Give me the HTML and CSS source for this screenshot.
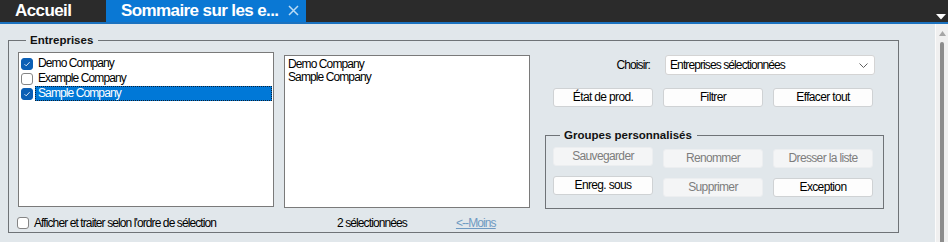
FILE: index.html
```html
<!DOCTYPE html>
<html lang="fr">
<head>
<meta charset="utf-8">
<title>Sommaire sur les entreprises</title>
<link rel="stylesheet" href="styles.css">
</head>
<body>
<div class="app">
  <div class="tabbar">
    <div class="tab">Accueil</div>
    <div class="tab tab-active">
      <span class="tab-title">Sommaire sur les e...</span>
      <svg class="tab-close" width="11" height="11" viewBox="0 0 11 11"><path d="M1 1 L10 10 M10 1 L1 10" stroke="#b9dbf5" stroke-width="1.5" fill="none"/></svg>
    </div>
    <div class="tab-spacer"></div>
    <svg class="tab-menu" width="10" height="6" viewBox="0 0 10 6"><path d="M0 0 H10 L5 5.5 Z" fill="#ffffff"/></svg>
  </div>
  <div class="main">
    <div class="content">
      <fieldset class="group">
        <legend class="group-legend">Entreprises</legend>
        <div class="group-body">
          <div class="col col-left">
            <div class="listbox list-check">
              <div class="check-row">
                <span class="cb cb-on"><svg width="12" height="12" viewBox="0 0 12 12"><path d="M3 6.2 L5 8.2 L9.2 3.8" stroke="#fff" stroke-width="1" fill="none"/></svg></span>
                <span class="row-label">Demo Company</span>
              </div>
              <div class="check-row">
                <span class="cb"></span>
                <span class="row-label">Example Company</span>
              </div>
              <div class="check-row">
                <span class="cb cb-on"><svg width="12" height="12" viewBox="0 0 12 12"><path d="M3 6.2 L5 8.2 L9.2 3.8" stroke="#fff" stroke-width="1" fill="none"/></svg></span>
                <span class="row-label row-selected">Sample Company</span>
              </div>
            </div>
            <div class="footer-row">
              <span class="cb cb-footer"></span>
              <span class="footer-text">Afficher et traiter selon l'ordre de sélection</span>
            </div>
          </div>
          <div class="col col-mid">
            <div class="listbox list-plain">
              <div class="plain-row">Demo Company</div>
              <div class="plain-row">Sample Company</div>
            </div>
            <div class="footer-row footer-mid">
              <span class="count">2 sélectionnées</span>
              <a class="less-link" href="#">&lt;--Moins</a>
            </div>
          </div>
          <div class="col col-right">
            <div class="choose-row">
              <span class="choose-label">Choisir:</span>
              <div class="select">
                <span>Entreprises sélectionnées</span>
                <svg width="9" height="5" viewBox="0 0 9 5"><path d="M0.5 0.5 L4.5 4.5 L8.5 0.5" stroke="#606060" stroke-width="1" fill="none"/></svg>
              </div>
            </div>
            <div class="btn-row">
              <button class="btn">État de prod.</button>
              <button class="btn">Filtrer</button>
              <button class="btn">Effacer tout</button>
            </div>
            <fieldset class="subgroup">
              <legend class="group-legend sub-legend">Groupes personnalisés</legend>
              <div class="btn-grid">
                <button class="btn btn-disabled">Sauvegarder</button>
                <button class="btn btn-disabled btn-low">Renommer</button>
                <button class="btn btn-disabled btn-low">Dresser la liste</button>
                <button class="btn">Enreg. sous</button>
                <button class="btn btn-disabled btn-low">Supprimer</button>
                <button class="btn btn-low">Exception</button>
              </div>
            </fieldset>
          </div>
        </div>
      </fieldset>
    </div>
    <div class="scrollbar">
      <svg class="scroll-up" width="7" height="5" viewBox="0 0 7 5"><path d="M0 5 L3.5 0 L7 5 Z" fill="#a6a6a6"/></svg>
      <div class="scroll-thumb"></div>
    </div>
  </div>
</div>
</body>
</html>
```
FILE: styles.css
```css
* { box-sizing: border-box; }

html, body {
  margin: 0;
  padding: 0;
  width: 948px;
  height: 242px;
  overflow: hidden;
  background: #e1e7eb;
  font-family: "Liberation Sans", Arial, sans-serif;
  font-size: 12px;
  letter-spacing: -0.9px;
  color: #000;
}

.app {
  display: flex;
  flex-direction: column;
  height: 242px;
}

/* ---------- tab bar ---------- */
.tabbar {
  display: flex;
  align-items: stretch;
  height: 24px;
  background: #2b2b2b;
  border-bottom: 2px solid #1b72bf;
  flex: none;
}

.tab {
  display: flex;
  align-items: center;
  width: 106px;
  padding-left: 15px;
  color: #fff;
  font-weight: bold;
  font-size: 17px;
  letter-spacing: -0.6px;
  line-height: 22px;
  white-space: nowrap;
}

.tab-active {
  width: 200px;
  background: #0a78d4;
}

.tab-title { flex: 1; }

.tab-close {
  flex: none;
  margin-right: 7px;
  margin-top: -1px;
}

.tab-spacer { flex: 1; }

.tab-menu {
  align-self: flex-start;
  margin-top: 14px;
  margin-right: 2px;
}

/* ---------- main area ---------- */
.main {
  flex: 1;
  display: flex;
  min-height: 0;
}

.content {
  flex: 1;
  padding: 9px 0 0 8px;
}

.group {
  width: 891px;
  margin: 0;
  padding: 5px 14px 2px 9px;
  border: 1px solid #6f7377;
}

.group-legend {
  padding: 0 5px 0 4px;
  margin-left: 8px;
  font-weight: bold;
  font-size: 11.5px;
  letter-spacing: 0;
  line-height: 14px;
  color: #111;
}

.group-body {
  display: flex;
  align-items: flex-start;
}

.col {
  display: flex;
  flex-direction: column;
}

.col-left { width: 256px; }
.col-mid { width: 246px; margin-left: 10px; }
.col-right { width: 339px; margin-left: 15px; margin-top: 3px; }

.listbox {
  background: #fff;
  border: 1px solid #7a7a7a;
}

.list-check {
  height: 155px;
  padding: 3px 1px 0 2px;
}

.check-row {
  display: flex;
  align-items: center;
  height: 15px;
}

.cb {
  flex: none;
  width: 12px;
  height: 12px;
  border: 1px solid #858585;
  border-radius: 3px;
  background: #fff;
  display: flex;
  align-items: center;
  justify-content: center;
}

.cb svg { display: block; }

.cb-on {
  background: #0b5fb5;
  border-color: #0b5fb5;
}

.row-label {
  flex: 1;
  height: 15px;
  margin-left: 2px;
  padding-left: 3px;
  line-height: 15px;
  white-space: nowrap;
}

.row-selected {
  background: #0078d7;
  color: #fff;
  outline: 1px dotted #0d2136;
  outline-offset: -1px;
}

.list-plain {
  height: 153px;
  margin-top: 3px;
  padding: 2px 3px 0 3px;
}

.plain-row {
  line-height: 13px;
  white-space: nowrap;
}

.footer-row {
  display: flex;
  align-items: center;
  height: 15px;
  margin-top: 8px;
  white-space: nowrap;
}

.cb-footer {
  margin-left: -1px;
}

.footer-text { margin-left: 5px; }

.footer-mid {
  margin-top: 7px;
  padding-left: 53px;
}

.less-link {
  margin-left: 49px;
  color: #6f9ac2;
  text-decoration: underline;
}

/* ---------- right panel ---------- */
.choose-row {
  display: flex;
  align-items: center;
  height: 20px;
  padding-right: 9px;
}

.choose-label {
  flex: 1;
  text-align: right;
  margin-right: 15px;
}

.select {
  width: 210px;
  height: 20px;
  display: flex;
  align-items: center;
  justify-content: space-between;
  padding: 0 6px 0 4px;
  background: #fff;
  border: 1px solid #d4d4d4;
  border-radius: 3px;
}

.btn-row {
  display: flex;
  gap: 10px;
  margin-top: 13px;
  padding-left: 8px;
}

.btn {
  width: 100px;
  height: 19px;
  margin: 0;
  padding: 0;
  font-family: "Liberation Sans", Arial, sans-serif;
  font-size: 12px;
  letter-spacing: -0.65px;
  line-height: 17px;
  color: #000;
  background: #fdfdfd;
  border: 1px solid #cfd2d4;
  border-radius: 3px;
}

.btn-disabled {
  background: #f4f5f6;
  border-color: #eceef0;
  color: #7d7d7d;
}

.btn-low { margin-top: 2px; }

.subgroup {
  margin: 21px 0 0 0;
  padding: 5px 7px 11px 7px;
  border: 1px solid #6f7377;
}

.sub-legend {
  margin-left: 7px;
}

.btn-grid {
  display: grid;
  grid-template-columns: repeat(3, 100px);
  column-gap: 10px;
  row-gap: 8px;
  align-items: start;
}

/* ---------- scrollbar ---------- */
.scrollbar {
  flex: none;
  width: 13px;
  background: #f0f0f0;
  border-left: 1px solid #fbfbfb;
  display: flex;
  flex-direction: column;
  align-items: center;
  padding-top: 7px;
}

.scroll-up { display: block; flex: none; }

.scroll-thumb {
  flex: 1;
  width: 4px;
  margin-top: 6px;
  background: #8c8c8c;
  border-radius: 2px 2px 0 0;
}
```
